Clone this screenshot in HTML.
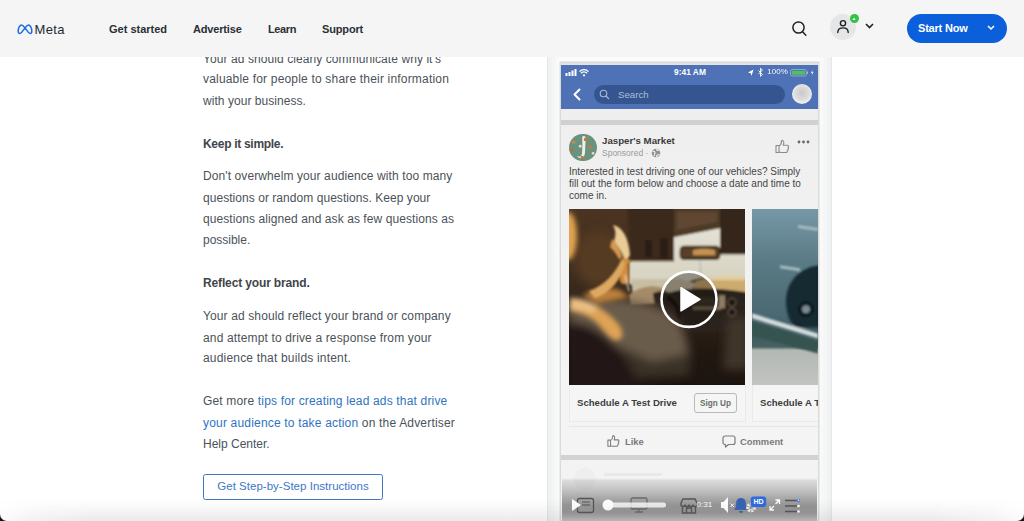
<!DOCTYPE html>
<html lang="en">
<head>
<meta charset="utf-8">
<title>Meta for Business</title>
<style>
*{box-sizing:border-box;margin:0;padding:0}
html,body{width:1024px;height:521px;overflow:hidden;background:#fff;font-family:"Liberation Sans",sans-serif;color:#444b52}
#page{position:relative;width:1024px;height:521px;overflow:hidden;background:#fff}
.abs{position:absolute;white-space:nowrap}
/* header */
#hdr{position:absolute;left:0;top:0;width:1024px;height:56.500px;background:#f5f5f5;z-index:5}
.nav{position:absolute;top:22.500px;font-size:11px;font-weight:bold;color:#2a3035;line-height:13px;white-space:nowrap}
#start{position:absolute;left:907px;top:14px;width:100px;height:29px;border-radius:15px;background:#0b5fdb;color:#fff;font-size:11px;font-weight:bold;line-height:29px;padding-left:11px;letter-spacing:-.2px}
/* left text */
.t{position:absolute;left:203px;font-size:12px;line-height:14px;color:#4b5259;white-space:nowrap}
.t.b{font-weight:bold;color:#3f454a}
.t a{color:#2f73c2;text-decoration:none}
#btn{position:absolute;left:203px;top:473.500px;width:180px;height:26px;border:1.5px solid #3d78c4;border-radius:2.500px;color:#3d78c4;font-size:11.500px;line-height:23px;letter-spacing:.02px;text-align:center;white-space:nowrap}
/* phone */
#phone{position:absolute;left:546.500px;top:56px;width:285px;height:470px;background:linear-gradient(90deg,#e2e3e5 0,#eff0f2 1.500px,#f3f4f5 5px,#fbfbfb 12.500px,#fbfbfb 272px,#f3f4f5 280px,#eff0f2 283.500px,#e2e3e5 285px)}
#screen{position:absolute;left:561px;top:63px;width:257px;height:458px;background:#e9e9eb;overflow:hidden;box-shadow:0 0 0 1.500px #dadada}
.pt{font-size:10px;line-height:12px;color:#454545}
.cta{font-size:9.600px;line-height:11px;font-weight:bold;color:#3d3d3d}
.act{font-size:9.400px;line-height:11px;font-weight:bold;color:#7a7a7a}
</style>
</head>
<body>
<div id="page">

<div id="hdr">
  <svg class="abs" style="left:17px;top:23px" width="16" height="12" viewBox="0 0 16 12"><path d="M1.2 8.2c0-3 1.6-6.2 3.4-6.2 1.2 0 2.1 1 3.4 3.2C9.3 3 10.2 2 11.4 2c1.800 0 3.400 3.200 3.400 6.200 0 1.500-.7 2.300-1.700 2.300-1 0-1.700-.7-3-2.900L8 5.200 5.900 7.600c-1.300 2.200-2 2.900-3 2.900-1 0-1.700-.8-1.700-2.300z" fill="none" stroke="#1a6be0" stroke-width="1.500"/></svg>
  <div class="abs" style="left:34.500px;top:21.500px;font-size:13px;line-height:16px;color:#1c2b33;letter-spacing:0.35px">Meta</div>
  <div class="nav" style="left:109px">Get started</div>
  <div class="nav" style="left:193px;letter-spacing:-.17px">Advertise</div>
  <div class="nav" style="left:268px;letter-spacing:-.4px">Learn</div>
  <div class="nav" style="left:322px;letter-spacing:-.15px">Support</div>
  <svg class="abs" style="left:791px;top:20px" width="17" height="17" viewBox="0 0 17 17"><circle cx="7.500" cy="7.500" r="5.600" fill="none" stroke="#222" stroke-width="1.500"/><path d="M11.600 11.800l3.200 3.400" stroke="#222" stroke-width="1.500" stroke-linecap="round"/></svg>
  <div class="abs" style="left:830px;top:14px;width:26px;height:26px;border-radius:13px;background:#e4e6e8"></div>
  <svg class="abs" style="left:836px;top:19px" width="14" height="15" viewBox="0 0 14 15"><circle cx="7" cy="4.200" r="2.600" fill="none" stroke="#222" stroke-width="1.400"/><path d="M1.800 13.500c0-3 2.200-4.600 5.200-4.600s5.200 1.600 5.200 4.600" fill="none" stroke="#222" stroke-width="1.400" stroke-linecap="round"/></svg>
  <div class="abs" style="left:849.500px;top:14px;width:9px;height:9px;border-radius:4.500px;background:#35c24a"></div><svg class="abs" style="left:852px;top:16.500px" width="4" height="4" viewBox="0 0 4 4"><path d="M2 .5l1.500 2.500h-3z" fill="#fff"/></svg>
  <svg class="abs" style="left:865px;top:23px" width="9" height="6" viewBox="0 0 9 6"><path d="M1 1l3.500 3.500L8 1" fill="none" stroke="#222" stroke-width="1.600"/></svg>
  <div id="start">Start Now
    <svg class="abs" style="left:80px;top:11px" width="8" height="6" viewBox="0 0 8 6"><path d="M1 1l3 3 3-3" fill="none" stroke="#fff" stroke-width="1.500"/></svg>
  </div>
</div>

<div class="t" style="top:52px;letter-spacing:0.078px">Your ad should clearly communicate why it's</div>
<div class="t" style="top:72px;letter-spacing:0.185px">valuable for people to share their information</div>
<div class="t" style="top:94px;letter-spacing:0.05px">with your business.</div>
<div class="t b" style="top:136.6px;letter-spacing:-0.294px">Keep it simple.</div>
<div class="t" style="top:169.4px;letter-spacing:0.1px">Don't overwhelm your audience with too many</div>
<div class="t" style="top:190.6px;letter-spacing:0.048px">questions or random questions. Keep your</div>
<div class="t" style="top:211.8px;letter-spacing:0.078px">questions aligned and ask as few questions as</div>
<div class="t" style="top:232.9px;letter-spacing:-0.019px">possible.</div>
<div class="t b" style="top:276px;letter-spacing:-0.14px">Reflect your brand.</div>
<div class="t" style="top:309px;letter-spacing:0.123px">Your ad should reflect your brand or company</div>
<div class="t" style="top:330.6px;letter-spacing:0.144px">and attempt to drive a response from your</div>
<div class="t" style="top:351px;letter-spacing:0.186px">audience that builds intent.</div>
<div class="t" style="top:394px;letter-spacing:0.165px">Get more <a>tips for creating lead ads that drive</a></div>
<div class="t" style="top:415.5px;letter-spacing:0.185px"><a>your audience to take action</a> on the Advertiser</div>
<div class="t" style="top:436.6px;letter-spacing:-0.009px">Help Center.</div>
<div id="btn">Get Step-by-Step Instructions</div>

<div id="phone"></div>
<div id="screen">
  <!-- status + nav bar -->
  <div class="abs" style="left:0;top:0;width:257px;height:2px;background:#e4e4e4"></div><div class="abs" style="left:0;top:2px;width:257px;height:44px;background:#4f72b7"></div>
  <svg class="abs" style="left:4px;top:5px" width="30" height="9" viewBox="0 0 30 9">
    <rect x="0.500" y="5" width="2" height="3" fill="#fff"/><rect x="3.500" y="4" width="2" height="4" fill="#fff"/><rect x="6.500" y="2.500" width="2" height="5.500" fill="#fff"/><rect x="9.500" y="1" width="2" height="7" fill="#fff"/>
    <path d="M14.500 3.600a6 6 0 0 1 9 0M16 5.300a4 4 0 0 1 6 0" fill="none" stroke="#fff" stroke-width="1.300"/><circle cx="19" cy="7.300" r="1.100" fill="#fff"/>
  </svg>
  <div class="abs" style="left:100px;top:3.800px;width:58px;text-align:center;font-size:8.400px;font-weight:bold;color:#fff;line-height:10px">9:41 AM</div>
  <svg class="abs" style="left:186px;top:4px" width="70" height="11" viewBox="0 0 70 11">
    <path d="M1 5.500L6.500 2.500 4.500 9 3.800 6.200z" fill="#fff"/>
    <path d="M11.500 3.500l4 4-2 1.800v-8l2 1.800-4 4" fill="none" stroke="#fff" stroke-width="0.900"/>
    <rect x="43.500" y="2.500" width="16" height="6.500" rx="1.800" fill="none" stroke="#9db3d9" stroke-width="0.800"/><rect x="44.800" y="3.700" width="13.400" height="4.100" rx="0.800" fill="#4fc35a"/><rect x="60" y="4.500" width="1" height="2.500" fill="#9db3d9"/>
    <path d="M65.500 3l-1.500 3h1.200l-.7 2.500 2-3.200h-1.200z" fill="#fff"/>
  </svg>
  <div class="abs" style="left:206.300px;top:3.800px;font-size:8px;color:#fff;line-height:10px;opacity:.95">100%</div>
  <svg class="abs" style="left:11px;top:25px" width="10" height="13" viewBox="0 0 10 13"><path d="M7.500 1.500L2.500 6.500l5 5" fill="none" stroke="#fff" stroke-width="2" stroke-linecap="round" stroke-linejoin="round"/></svg>
  <div class="abs" style="left:33px;top:22px;width:191px;height:19px;border-radius:9.500px;background:#34558f"></div>
  <svg class="abs" style="left:38px;top:26px" width="11" height="11" viewBox="0 0 11 11"><circle cx="4.500" cy="4.500" r="3.300" fill="none" stroke="#a9b9d6" stroke-width="1.100"/><path d="M7 7l3 3" stroke="#a9b9d6" stroke-width="1.100"/></svg>
  <div class="abs" style="left:57px;top:25.500px;font-size:9.700px;line-height:11px;color:#aebcd8">Search</div>
  <div class="abs" style="left:231px;top:21px;width:20px;height:20px;border-radius:10px;background:radial-gradient(circle at 50% 45%,#c9c9c9 0,#dcdcdc 45%,#f3f3f3 75%,#fff 100%)"></div>
  <!-- gap -->
  <div class="abs" style="left:0;top:46px;width:257px;height:11px;background:#eeeeee"></div>
  <div class="abs" style="left:0;top:57px;width:257px;height:5.500px;background:#cfd0cf"></div>
  <!-- post card -->
  <div class="abs" style="left:0;top:62px;width:257px;height:330px;background:linear-gradient(180deg,#efefef 0,#f1f1f1 30%,#f4f4f4 80%)"></div>
  <div class="abs" style="left:8px;top:70.800px;width:27.500px;height:27.500px;border-radius:14px;background:#6b917f;overflow:hidden">
    <svg width="27.500" height="27.500" viewBox="0 0 28 28"><path d="M14.500 2c2.500 0 3 1.500 2.600 4-.5 4-.6 9-.8 13-.2 3.500-2 5.600-4.600 5.600-1.800 0-3.200-1-3.400-2.600.8.800 2 1.300 3 1 1.300-.5 1.800-2 2-4.500.3-5 .4-9 .2-12.500C13.400 3.500 13.500 2 14.500 2z" fill="#f0eee8"/><circle cx="17" cy="5.500" r="1.900" fill="#c47a34"/><circle cx="4.800" cy="8.300" r="1.800" fill="#c98a4e"/><circle cx="21.400" cy="13.100" r="1.900" fill="#c47a3c"/><circle cx="2.300" cy="16.600" r="1.800" fill="#b9722f"/><circle cx="13.500" cy="23.800" r="1.700" fill="#c47a34"/><circle cx="11.400" cy="12.400" r="1.500" fill="#eadfc8"/><circle cx="24.500" cy="19.700" r="1.400" fill="#eadfc8"/></svg>
  </div>
  <div class="abs" id="jm" style="left:41px;top:72px;font-size:9.700px;font-weight:bold;color:#3b3b3b;line-height:12px">Jasper's Market</div>
  <div class="abs" id="sp" style="left:41px;top:84.500px;font-size:8.500px;color:#9a9a9a;line-height:10px">Sponsored ·</div>
  <svg class="abs" style="left:90px;top:85px" width="10" height="10" viewBox="0 0 10 10"><circle cx="5" cy="5" r="4.300" fill="#929292"/><path d="M1.500 3.500c1.500-.5 2.500 0 2.500 1.200S3 6 3.500 8M5.500 1c0 1.500 1.200 1.500 2.200 1.200M5.500 9c0-1.800 1-2.500 3-2.500" fill="none" stroke="#f4f4f4" stroke-width="1.100"/></svg>
  <svg class="abs" style="left:214px;top:76.300px" width="16" height="15" viewBox="0 0 16 15"><path d="M1 6.500h3v7H1zM4 7c2-1 2.500-3 2.500-5 0-1 2.300-1 2.300 1.500 0 1-.3 2-.6 2.700h4.300c1.500 0 1.500 2 .5 2.200.8.500.6 1.800-.3 2 .5.600.2 1.600-.6 1.700.3.700-.2 1.400-1.100 1.400H6.500c-1 0-1.500-.5-2.500-.5z" fill="none" stroke="#8a8a8a" stroke-width="1.100" stroke-linejoin="round"/></svg>
  <svg class="abs" style="left:236px;top:77px" width="13" height="4" viewBox="0 0 13 4"><circle cx="2" cy="2" r="1.400" fill="#666"/><circle cx="6.500" cy="2" r="1.400" fill="#666"/><circle cx="11" cy="2" r="1.400" fill="#666"/></svg>
  <div class="abs pt" style="left:8px;top:103.300px">Interested in test driving one of our vehicles? Simply</div>
  <div class="abs pt" style="left:8px;top:115.300px">fill out the form below and choose a date and time to</div>
  <div class="abs pt" style="left:8px;top:127.300px">come in.</div>
  <svg class="abs" style="left:8px;top:146px" width="176" height="176.600" viewBox="0 0 176 176" preserveAspectRatio="none">
    <defs>
      <filter id="b1" x="-10%" y="-10%" width="120%" height="120%"><feGaussianBlur stdDeviation="1.200"/></filter>
      <filter id="b2" x="-20%" y="-20%" width="140%" height="140%"><feGaussianBlur stdDeviation="2.400"/></filter>
      <filter id="b3" x="-20%" y="-20%" width="140%" height="140%"><feGaussianBlur stdDeviation="5"/></filter>
      <clipPath id="c1"><rect width="176" height="176"/></clipPath>
      <linearGradient id="bg1" x1="0" y1="0" x2="0" y2="1"><stop offset="0" stop-color="#4b3421"/><stop offset=".3" stop-color="#42301f"/><stop offset=".55" stop-color="#33261a"/><stop offset=".8" stop-color="#221811"/><stop offset="1" stop-color="#1c1410"/></linearGradient>
      <linearGradient id="ws" x1="0" y1="0" x2="0" y2="1"><stop offset="0" stop-color="#e4e1d4"/><stop offset="1" stop-color="#d6d2c0"/></linearGradient>
    </defs>
    <g clip-path="url(#c1)">
      <rect width="176" height="176" fill="url(#bg1)"/>
      <g filter="url(#b1)">
        <!-- windshield -->
        <path d="M60 52h45V28l46-9v26h27v24h-46l-22 6H60z" fill="url(#ws)"/>
        <path d="M62 70h50l16 4-10 12-54 2z" fill="#c8bea4"/>
        <!-- roof, visors -->
        <path d="M58 -2h47v53H62z" fill="#3a2a1c"/>
        <rect x="151" y="-2" width="27" height="47" fill="#35271c"/>
        <path d="M105 -2h46v21l-46 9z" fill="#4d3a28"/>
        <path d="M108 3h40v10l-40 8z" fill="#5e4730"/>
        <path d="M76 31h7v17h-7zM91 29h8v20h-8z" fill="#2a1e15"/>
        <!-- mirror -->
        <rect x="111.500" y="37.500" width="39" height="12.500" rx="3.500" fill="#5a3f25" stroke="#2a2019" stroke-width="1.600"/>
        <path d="M124 41c6-2 16-2 22 0v5h-22z" fill="#c4924f"/>
        <path d="M131 50l1 17" stroke="#a5acb3" stroke-width="1"/>
        <!-- dashboard -->
        <path d="M126 72c14-5 36-6 52-3v16h-54z" fill="#cdaa6e"/>
        <path d="M140 69c10-3 24-3 36-2v4h-36z" fill="#e2cfa0"/>
        <path d="M92 86c22-9 54-8 86-3v40H92z" fill="#2a211a"/>
        <circle cx="163" cy="93" r="4" fill="#1c1612" stroke="#6a5c4c" stroke-width="1.100"/>
        <circle cx="163" cy="103" r="4" fill="#1c1612" stroke="#6a5c4c" stroke-width="1.100"/>
        <rect x="124" y="97" width="28" height="3.500" fill="#776a56"/>
        <rect x="150" y="86" width="6" height="13" fill="#8d7d62"/>
        <rect x="126" y="88" width="20" height="7" fill="#3a3128"/>
        <!-- hands / wheel -->
        <path d="M60 86c8-8 24-12 36-6l4 6-8 8-30 2z" fill="#a58c68"/>
        <path d="M84 84c12-5 24 0 28 12v22H88z" fill="#2d231c"/>
        <path d="M98 88c8 4 12 12 12 22" fill="none" stroke="#15100c" stroke-width="4"/>
      </g>
      <g filter="url(#b3)">
        <!-- shirt -->
        <path d="M30 120c30 0 70 4 92 20l-2 26-70 4z" fill="#3b3027"/>
        <path d="M0 94c30-8 72-6 102 10 12 12 17 26 17 40l-36 8C60 140 30 128 0 126z" fill="#6a5c4c"/>
        <path d="M0 112c20 0 40 14 52 30l24 40H0z" fill="#211812"/>
        <path d="M158 108h22v52h-26z" fill="#40362c"/>
        <ellipse cx="30" cy="50" rx="24" ry="28" fill="#553a24"/>
      </g>
      <g filter="url(#b2)">
        <ellipse cx="-1" cy="27" rx="9" ry="24" fill="#e0a350"/>
        <path d="M1 89c15 0 32 9 44 21 8 8 11 15 6 20-7 3-12-4-19-12C25 109 13 103 1 102z" fill="#dfa354"/>
        <path d="M1 89c10 0 20 4 28 9l-6 6c-7-3-14-4-22-4z" fill="#e9c084"/>
        <path d="M14 86c10-6 22-8 36-6l10 8-32 6z" fill="#bd7f3a"/>
      </g>
      <g filter="url(#b1)">
        <!-- hair + face -->
        <path d="M44 16c10 2 16 14 17 30l-5 7c-2-10-9-17-11-21 2-6 2-10-1-16z" fill="#ebcb96"/>
        <path d="M43 30c3 4 8 10 10 18l-3 2c-3-6-6-10-9-12z" fill="#d79a4e"/>
        <path d="M52 50c4-2 8 0 10 2l-3 3 1 17c-3 4-7 4-9 0z" fill="#d38c3d"/>
        <path d="M20 82c14-5 26-17 32-31l4 2c-4 18-14 30-30 36z" fill="#dda861"/>
        <path d="M56 66l4 16" stroke="#e9dcc0" stroke-width="1.200"/>
      </g>
      <circle cx="120" cy="90" r="27.500" fill="rgba(20,16,12,.35)" stroke="#fff" stroke-width="2.600"/>
      <path d="M112 78.500l19 11.500-19 11.500z" fill="#fff" stroke="#fff" stroke-width="1.500" stroke-linejoin="round"/>
    </g>
  </svg>
  <svg class="abs" style="left:191px;top:146px" width="66" height="176.600" viewBox="0 0 66 176" preserveAspectRatio="none">
    <defs><linearGradient id="bg2" x1="0" y1="0" x2="0" y2="1"><stop offset="0" stop-color="#7698a6"/><stop offset=".3" stop-color="#5a7a85"/><stop offset=".6" stop-color="#4a6972"/><stop offset=".7" stop-color="#3c5960"/><stop offset=".78" stop-color="#47625f"/><stop offset=".8" stop-color="#b3b8b5"/><stop offset="1" stop-color="#c2c4c1"/></linearGradient></defs>
    <rect width="66" height="176" fill="url(#bg2)"/>
    <g filter="url(#b1)">
      <path d="M46 16l20 3v3l-20-3zM28 56l20 3v3l-20-3z" fill="#a9bcc2"/>
      <path d="M34 92c0-20 14-34 34-36v62H44c-6-4-10-14-10-26z" fill="#142a31"/>
      <circle cx="54" cy="100" r="8" fill="#0f1b20"/><circle cx="54" cy="100" r="4" fill="#7a8a8e"/>
      <path d="M0 104l66 20v5L0 109z" fill="#d5dcdc"/>
      <path d="M0 112l66 20v12L0 126z" fill="#35524f"/>
    </g>
  </svg>
  <!-- CTA -->
  <div class="abs" style="left:8px;top:322px;width:177px;height:37px;border:1px solid #eaeaea;border-top:0;background:#f5f5f5"></div>
  <div class="abs" style="left:191px;top:322px;width:70px;height:37px;border:1px solid #eaeaea;border-top:0;background:#f5f5f5"></div>
  <div class="abs cta" style="left:16px;top:334px">Schedule A Test Drive</div>
  <div class="abs" style="left:133px;top:330px;width:43px;height:20px;border:1px solid #b9b9b9;border-radius:3px;font-size:8.200px;font-weight:bold;color:#6d6d6d;text-align:center;line-height:19.500px">Sign Up</div>
  <div class="abs cta" style="left:199px;top:334px">Schedule A Test Drive</div>
  <div class="abs" style="left:8px;top:363px;width:249px;height:1px;background:#e6e6e6"></div>
  <svg class="abs" style="left:46px;top:371px" width="14" height="14" viewBox="0 0 16 15"><path d="M1 6.500h3v7H1zM4 7c2-1 2.500-3 2.500-5 0-1 2.300-1 2.300 1.500 0 1-.3 2-.6 2.700h4.300c1.500 0 1.500 2 .5 2.200.8.500.6 1.800-.3 2 .5.600.2 1.600-.6 1.700.3.700-.2 1.400-1.100 1.400H6.500c-1 0-1.500-.5-2.500-.5z" fill="none" stroke="#7d7d7d" stroke-width="1.200" stroke-linejoin="round"/></svg>
  <div class="abs act" style="left:64px;top:373px">Like</div>
  <svg class="abs" style="left:161px;top:372px" width="14" height="13" viewBox="0 0 14 13"><path d="M3 1h8a2 2 0 0 1 2 2v4.500a2 2 0 0 1-2 2H6.500L3.500 12V9.500H3a2 2 0 0 1-2-2V3a2 2 0 0 1 2-2z" fill="none" stroke="#7d7d7d" stroke-width="1.200" stroke-linejoin="round"/></svg>
  <div class="abs act" style="left:179px;top:373px">Comment</div>
  <div class="abs" style="left:0;top:392px;width:257px;height:5px;background:#d2d2d2"></div>
  <div class="abs" style="left:0;top:397px;width:257px;height:61px;background:#f3f3f3"></div>
  <div class="abs" style="left:13px;top:405px;width:22px;height:22px;border-radius:11px;background:#eeeeee"></div>
  <div class="abs" style="left:43px;top:410px;width:58px;height:3px;background:#e9e9e9"></div>
  <div class="abs" style="left:0.500px;top:415px;width:255px;height:43px;background:linear-gradient(180deg,rgba(60,60,60,0) 0,rgba(70,70,70,.14) 6%,rgba(70,70,70,.24) 22%,rgba(62,62,62,.42) 48%,rgba(58,58,58,.5) 64%,rgba(58,58,58,.5) 80%,rgba(70,70,70,.42) 90%,rgba(90,90,90,.3) 100%)"></div>
  <svg class="abs" style="left:8px;top:430px" width="240" height="24" viewBox="0 0 240 24">
    <rect x="8.500" y="5.500" width="16" height="14" rx="2" fill="none" stroke="#555" stroke-width="1.300"/><path d="M13 9h8M13 12h8" stroke="#555" stroke-width="1.200"/>
    <path d="M3 6l9 6-9 6z" fill="#fff"/>
    <rect x="62" y="5" width="16" height="11" rx="1.500" fill="none" stroke="#6a6a6a" stroke-width="1.300"/><path d="M66 19h8M70 16v3" stroke="#6a6a6a" stroke-width="1.300"/>
    <rect x="39" y="9.500" width="58" height="5" rx="2.500" fill="rgba(255,255,255,.8)"/>
    <circle cx="39" cy="12" r="5.500" fill="#fff"/>
    <path d="M112 10l2-4h12l2 4v1.500a2 2 0 0 1-4 0 2 2 0 0 1-4 0 2 2 0 0 1-4 0 2 2 0 0 1-4 0zM113.500 13v7h13v-7M117.500 20v-5h5v5" fill="none" stroke="#555" stroke-width="1.400"/>
    <path d="M152 9h2.500l4.500-5v16l-4.500-5H152z" fill="#fff"/><path d="M161.500 10.500l3.500 3.500M165 10.500l-3.500 3.500" stroke="#fff" stroke-width="1"/>
    <path d="M172 5c3.200 0 4.800 2.200 4.800 5.200 0 3.200.6 5 2.200 6.800h-14c1.600-1.800 2.200-3.600 2.200-6.800 0-3 1.600-5.200 4.800-5.200zM170 18a2 2 0 0 0 4 0z" fill="#3863b2"/>
    <circle cx="182" cy="14.500" r="3.200" fill="none" stroke="#f0f0f0" stroke-width="3.400" stroke-dasharray="1.900 .9"/>
    <rect x="181.700" y="3.500" width="15.500" height="10.500" rx="2.800" fill="#2e6be0"/>
    <path d="M206.500 7h4v4M210 7.500l-3.500 3.500M205 17h-4v-4M201.500 16.500l3.500-3.500" fill="none" stroke="#fff" stroke-width="1.300"/>
    <path d="M216 7.500h12M216 13h12M216 18.500h12" stroke="#555" stroke-width="1.400"/><circle cx="229.500" cy="7.500" r="1.700" fill="#3d7be0"/><circle cx="229.500" cy="7.300" r=".8" fill="#fff"/><circle cx="229.500" cy="13" r="1.300" fill="#fff"/><circle cx="229.500" cy="18.500" r="1.300" fill="#fff"/>
  </svg>
  <div class="abs" style="left:135.400px;top:437px;font-size:8.100px;line-height:10px;color:#fff">0:31</div>
  <div class="abs" style="left:189.500px;top:434.300px;width:16px;font-size:7px;line-height:9px;font-weight:bold;color:#fff;text-align:center">HD</div>
</div>

<div class="abs" style="left:0;top:499px;width:1024px;height:22px;background:linear-gradient(180deg,rgba(90,90,90,0) 0,rgba(90,90,90,.035) 35%,rgba(90,90,90,.09) 75%,rgba(90,90,90,.13) 100%);-webkit-mask-image:linear-gradient(90deg,rgba(0,0,0,.15) 0,rgba(0,0,0,.6) 30px,#000 90px,#000 934px,rgba(0,0,0,.6) 994px,rgba(0,0,0,.15) 1024px);mask-image:linear-gradient(90deg,rgba(0,0,0,.15) 0,rgba(0,0,0,.6) 30px,#000 90px,#000 934px,rgba(0,0,0,.6) 994px,rgba(0,0,0,.15) 1024px);z-index:8"></div>
<svg class="abs" style="left:0;top:514px;z-index:9" width="7" height="7" viewBox="0 0 7 7"><path d="M0 0v7h7A7 7 0 0 1 0 0z" fill="#1a1410"/></svg>
<svg class="abs" style="left:1017px;top:514px;z-index:9" width="7" height="7" viewBox="0 0 7 7"><path d="M7 0v7H0A7 7 0 0 0 7 0z" fill="#1a1410"/></svg>

</div>
</body>
</html>
